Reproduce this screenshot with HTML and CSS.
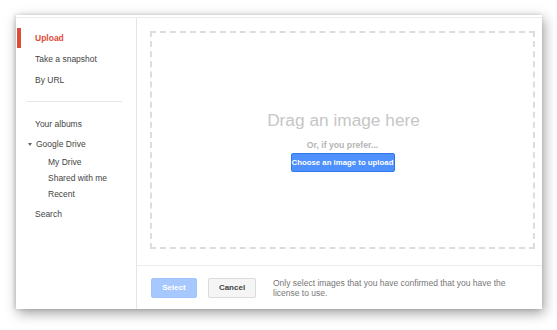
FILE: index.html
```html
<!DOCTYPE html>
<html>
<head>
<meta charset="utf-8">
<link rel="stylesheet" href="styles.css">
</head>
<body>
<div class="stage">
  <div class="window">
    <div class="topline"></div>
    <div class="body">
      <nav class="sidebar">
        <div class="nav-group">
          <div class="nav-item active">Upload</div>
          <div class="nav-item">Take a snapshot</div>
          <div class="nav-item">By URL</div>
        </div>
        <div class="divider"></div>
        <div class="nav-group lower">
          <div class="nav-item">Your albums</div>
          <div class="nav-item drive"><span class="tri"></span>Google Drive</div>
          <div class="sub-item">My Drive</div>
          <div class="sub-item">Shared with me</div>
          <div class="sub-item">Recent</div>
          <div class="nav-item search">Search</div>
        </div>
      </nav>
      <main class="main">
        <div class="dropzone">
          <div class="drag">Drag an image here</div>
          <div class="prefer">Or, if you prefer...</div>
          <button class="choose">Choose an image to upload</button>
        </div>
        <div class="footer">
          <button class="btn select">Select</button>
          <button class="btn cancel">Cancel</button>
          <p class="note">Only select images that you have confirmed that you have the license to use.</p>
        </div>
      </main>
    </div>
  </div>
</div>
</body>
</html>
```
FILE: styles.css
```css
* { box-sizing: border-box; }
html, body { margin: 0; padding: 0; background: #fff; }
body { font-family: "Liberation Sans", Arial, sans-serif; width: 557px; height: 330px; overflow: hidden; }
.stage { padding: 15px 15px 21px 16px; }
.window {
  width: 526px; height: 294px; background: #fff;
  box-shadow: 2px 4px 12px rgba(0,0,0,0.38), -1px 0 4px rgba(0,0,0,0.15);
  display: flex; flex-direction: column;
}
.topline { height: 3px; border-bottom: 1px solid #ececec; flex: none; }
.body { flex: 1; display: flex; min-height: 0; }
.sidebar { width: 121px; border-right: 1px solid #e5e5e5; padding-top: 10px; flex: none; }
.nav-item { font-size: 8.5px; color: #444; height: 21px; line-height: 21px; padding-left: 19px; position: relative; }
.nav-item.active { color: #dd4b39; font-weight: bold; }
.nav-item.active::before { content: ""; position: absolute; left: 1px; top: 0; width: 4px; height: 20px; background: #dd4b39; }
.divider { height: 1px; background: #e5e5e5; margin: 10px 14px 12px 11px; }
.lower .nav-item { height: 20px; line-height: 20px; }
.nav-item.drive { padding-left: 12px; display: flex; align-items: center; }
.tri { width: 0; height: 0; border-left: 2.5px solid transparent; border-right: 2.5px solid transparent; border-top: 3px solid #666; margin-right: 4px; }
.sub-item { font-size: 8.5px; color: #444; height: 16px; line-height: 16px; padding-left: 32px; }
.nav-item.search { margin-top: 2px; }
.main { flex: 1; display: flex; flex-direction: column; }
.dropzone {
  margin: 13px 7px 0 13px; height: 218px; border: 2px dashed #ddd;
  display: flex; flex-direction: column; align-items: center; padding-top: 77px;
}
.drag { font-size: 17.3px; color: #c6c6c6; line-height: 20px; margin-left: 2px; }
.prefer { font-size: 8.7px; font-weight: bold; color: #b5b5b5; margin-top: 10px; line-height: 10px; }
.choose {
  margin-top: 3px; width: 104px; height: 19px; border: 1px solid #3079ed; border-radius: 2px;
  background: #4d90fe; color: #fff; font-family: inherit; font-size: 7.8px; font-weight: bold; padding: 0;
}
.footer { margin-top: 16px; border-top: 1px solid #ebebeb; flex: 1; display: flex; align-items: center; padding-left: 14px; }
.btn { height: 20px; border-radius: 2px; font-family: inherit; font-size: 8px; font-weight: bold; padding: 0; }
.select { width: 46px; background: #a6c8ff; border: 1px solid #a0c3fc; color: #fff; }
.cancel { width: 48px; margin-left: 11px; background: #f5f5f5; border: 1px solid #dcdcdc; color: #444; }
.note { margin: 0 0 0 17px; font-size: 8.5px; line-height: 10px; color: #777; width: 250px; }
```
